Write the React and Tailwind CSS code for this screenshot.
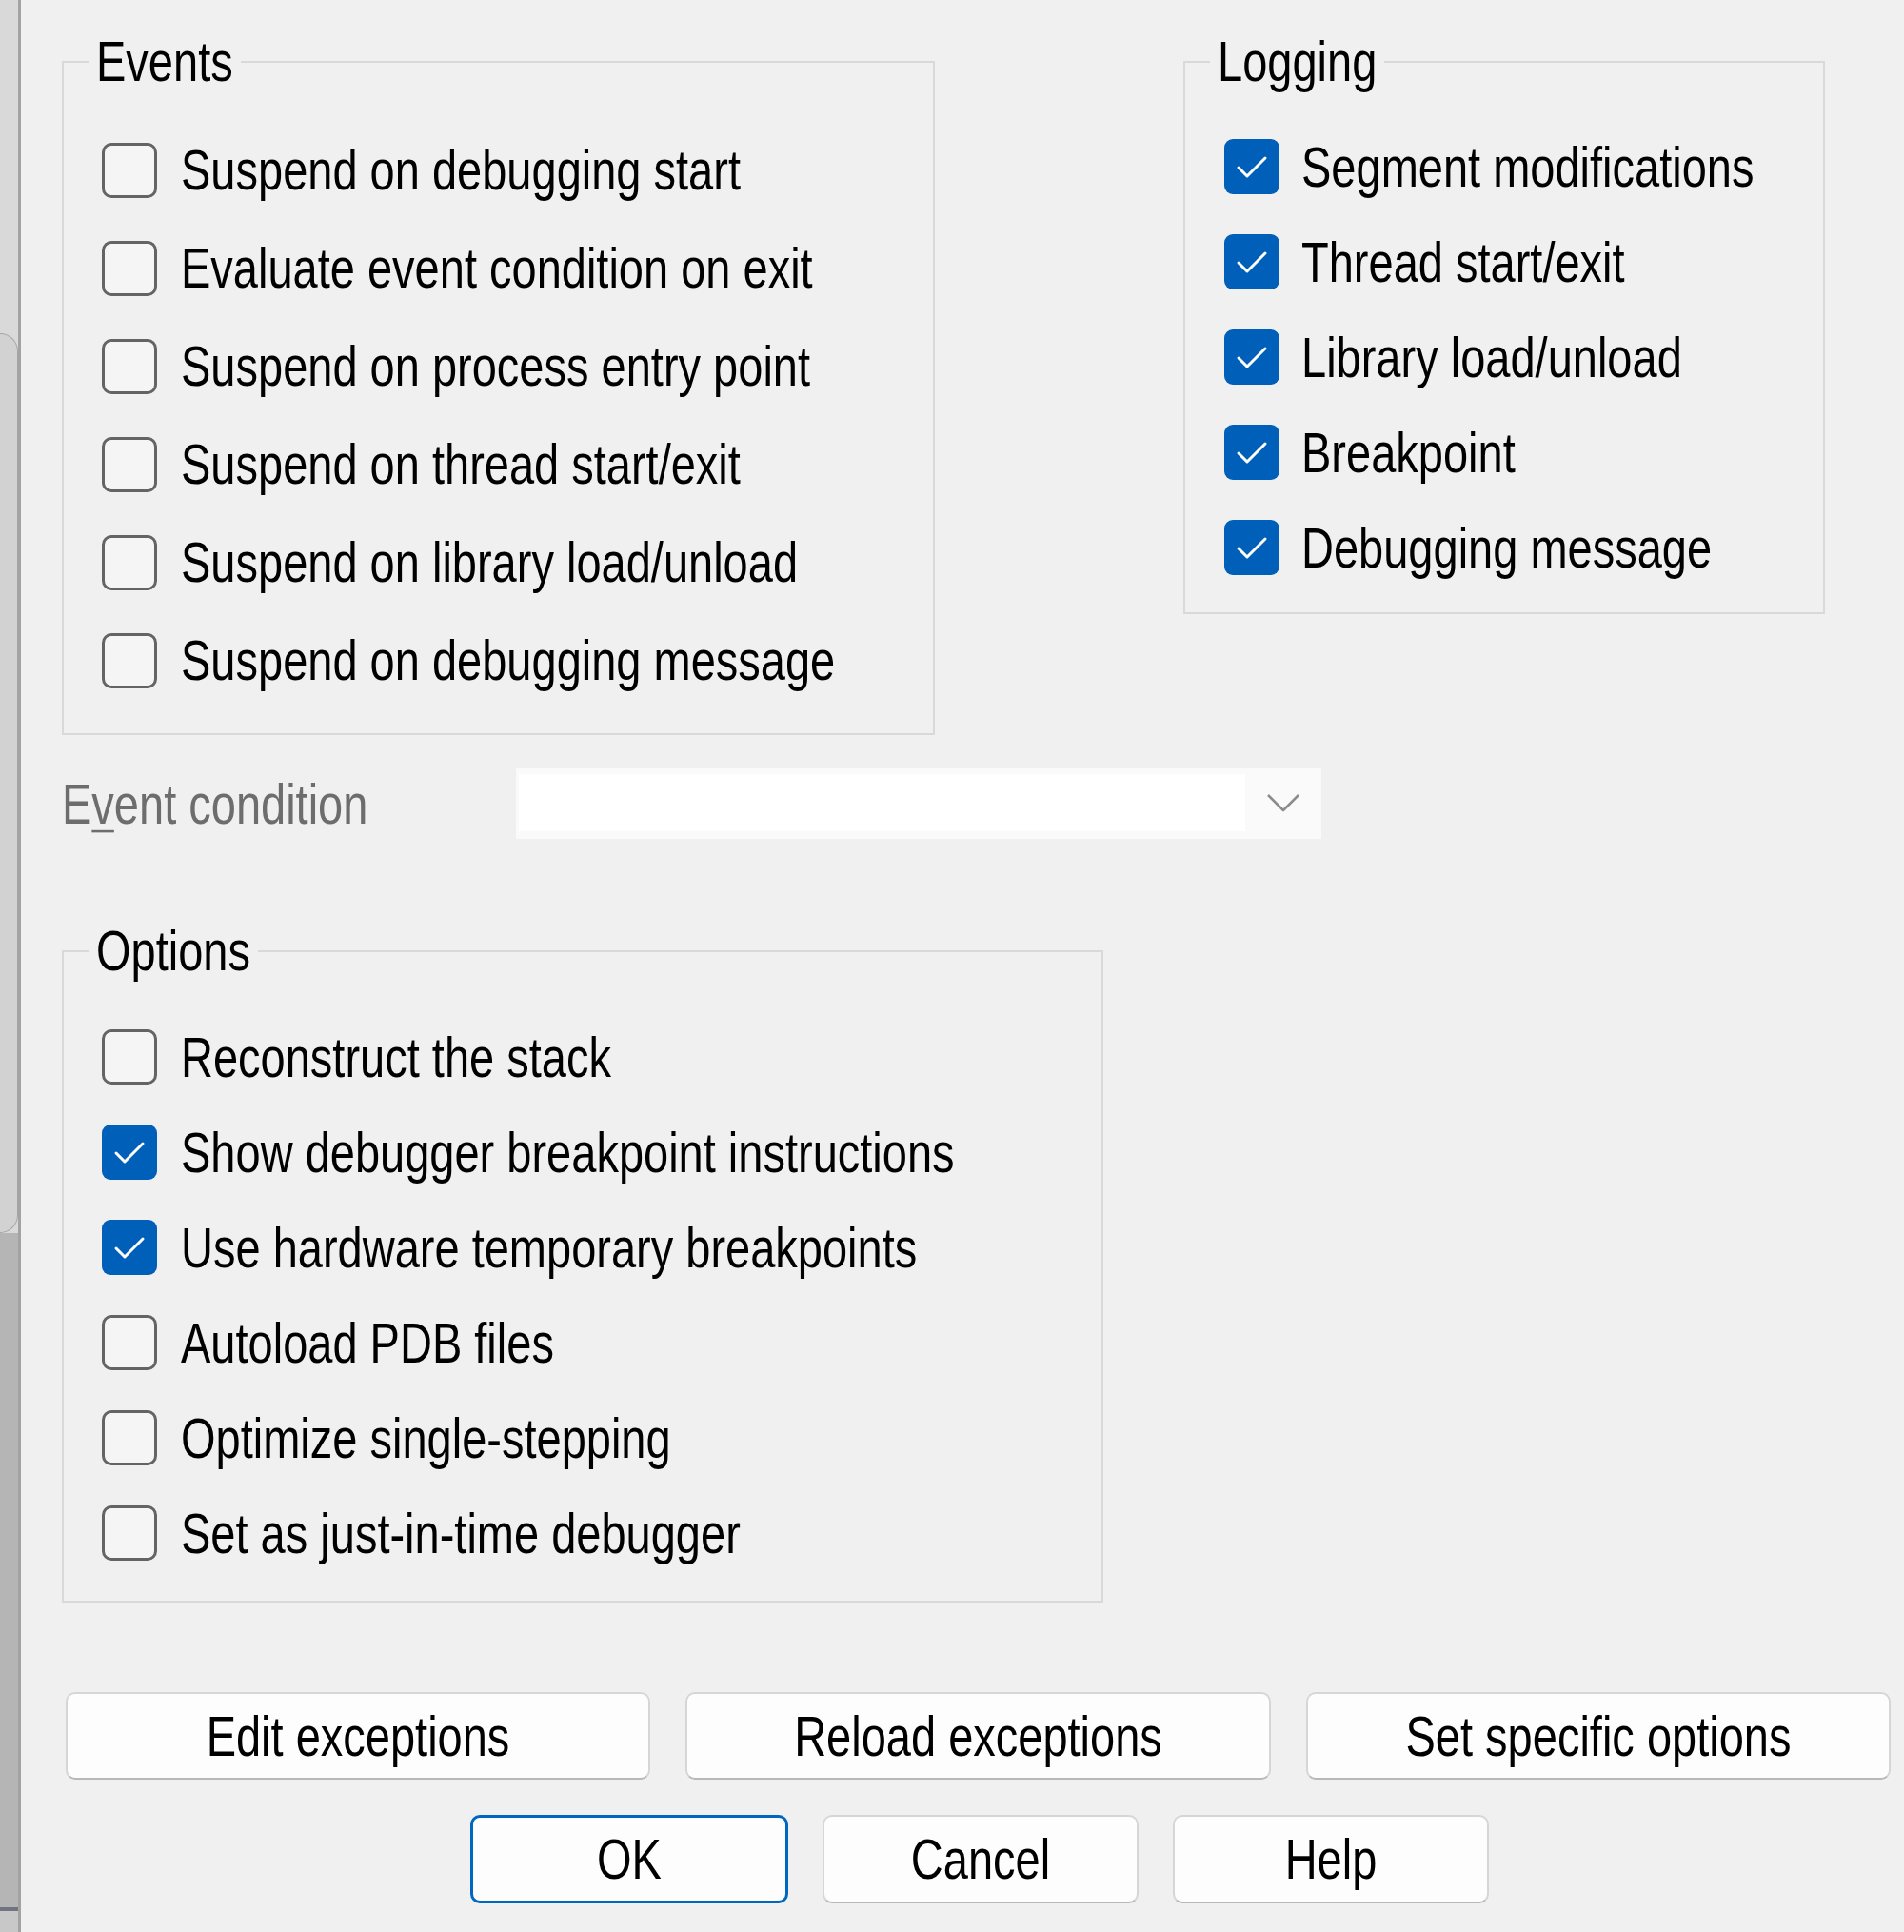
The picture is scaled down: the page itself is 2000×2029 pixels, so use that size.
import React from "react";

const F = "font-['Liberation_Sans',Arial,sans-serif]";

function T({ children, className = "" }) {
  return <span className={`inline-block scale-y-[1.27] whitespace-nowrap ${className}`}>{children}</span>;
}

function Check({ checked }) {
  if (checked)
    return (
      <div className="w-[58px] h-[58px] shrink-0 rounded-[9px] bg-[#005fb8] flex items-center justify-center">
        <svg width="58" height="58" viewBox="0 0 58 58">
          <path d="M15 30 L24 39 L43 20" fill="none" stroke="#ffffff" strokeWidth="3" strokeLinecap="round" strokeLinejoin="round" />
        </svg>
      </div>
    );
  return <div className="w-[58px] h-[58px] shrink-0 rounded-[10px] border-[3px] border-[#646464] bg-[#f5f5f5]" />;
}

function Row({ label, checked, h, gap }) {
  return (
    <div className={`flex items-center ${h} ${gap}`}>
      <Check checked={checked} />
      <T>{label}</T>
    </div>
  );
}

const events = [
  "Suspend on debugging start",
  "Evaluate event condition on exit",
  "Suspend on process entry point",
  "Suspend on thread start/exit",
  "Suspend on library load/unload",
  "Suspend on debugging message",
];

const logging = [
  "Segment modifications",
  "Thread start/exit",
  "Library load/unload",
  "Breakpoint",
  "Debugging message",
];

const options = [
  ["Reconstruct the stack", false],
  ["Show debugger breakpoint instructions", true],
  ["Use hardware temporary breakpoints", true],
  ["Autoload PDB files", false],
  ["Optimize single-stepping", false],
  ["Set as just-in-time debugger", false],
];

function Btn({ children, w, primary }) {
  return (
    <button
      className={`${w} h-full rounded-[10px] bg-[#fdfdfd] text-black text-[47px] leading-none ${
        primary ? "border-[3px] border-[#0067c0]" : "border-2 border-[#d6d6d6] border-b-[#b8b8b8]"
      }`}
    >
      <T>{children}</T>
    </button>
  );
}

export default function App() {
  return (
    <div className={`flex w-[2000px] h-[2029px] overflow-hidden ${F}`}>
      {/* background window strip */}
      <div className="w-[22px] shrink-0 flex flex-col border-r-[3px] border-[#a3a3a3] bg-[#b5b5b5]">
        <div className="h-[350px] bg-[#d9d9d9]" />
        <div className="h-[945px] bg-[#d9d9d9]">
          <div className="h-full rounded-tr-[22px] rounded-br-[22px] bg-[#d2d2d2] border-y border-r border-[#a5a5a5]" />
        </div>
        <div className="h-[708px]" />
        <div className="h-[4px] bg-[#6f7480]" />
        <div className="flex-1 bg-[#c8c8c8]" />
      </div>

      {/* dialog */}
      <div className="flex-1 bg-[#f0f0f0] text-black text-[47px] leading-none pl-[43px] pt-[35px] flex flex-col">
        <div className="flex items-start gap-[261px]">
          <fieldset className="m-0 p-0 min-w-0 border-2 border-[#d9d9d9] w-[917px] h-[737px]">
            <legend className="ml-[26px] px-[8px] leading-[60px]"><T>Events</T></legend>
            <div className="pl-[40px] pt-[32px] flex flex-col">
              {events.map((e) => (
                <Row key={e} label={e} checked={false} h="h-[103px]" gap="gap-[25px]" />
              ))}
            </div>
          </fieldset>
          <fieldset className="m-0 p-0 min-w-0 border-2 border-[#d9d9d9] w-[674px] h-[610px]">
            <legend className="ml-[26px] px-[8px] leading-[60px]"><T>Logging</T></legend>
            <div className="pl-[41px] pt-[30px] flex flex-col">
              {logging.map((e) => (
                <Row key={e} label={e} checked={true} h="h-[100px]" gap="gap-[23px]" />
              ))}
            </div>
          </fieldset>
        </div>

        <div className="mt-[35px] flex items-center h-[74px]">
          <div className="w-[477px] text-[#6d6d6d]">
            <T>
              E<span className="underline decoration-2 underline-offset-[5px]">v</span>ent condition
            </T>
          </div>
          <div className="w-[846px] h-[74px] bg-[#fafafa] flex pt-[6px] pb-[8px] pl-[3px]">
            <div className="flex-1 bg-white" />
            <div className="w-[80px] flex items-center justify-center">
              <svg width="36" height="22" viewBox="0 0 36 22">
                <path d="M2 3 L18 19 L34 3" fill="none" stroke="#8c8c8c" strokeWidth="2.5" strokeLinejoin="round" />
              </svg>
            </div>
          </div>
        </div>

        <fieldset className="mt-[88px] m-0 p-0 min-w-0 border-2 border-[#d9d9d9] w-[1094px] h-[714px]">
          <legend className="ml-[26px] px-[8px] leading-[60px]"><T>Options</T></legend>
          <div className="pl-[40px] pt-[31px] flex flex-col">
            {options.map(([e, c]) => (
              <Row key={e} label={e} checked={c} h="h-[100px]" gap="gap-[25px]" />
            ))}
          </div>
        </fieldset>

        <div className="mt-[94px] h-[92px] flex gap-[37px] pl-[4px]">
          <Btn w="w-[614px]">Edit exceptions</Btn>
          <Btn w="w-[615px]">Reload exceptions</Btn>
          <Btn w="w-[614px]">Set specific options</Btn>
        </div>

        <div className="mt-[37px] h-[93px] flex gap-[36px] pl-[429px]">
          <Btn w="w-[334px]" primary>OK</Btn>
          <Btn w="w-[332px]">Cancel</Btn>
          <Btn w="w-[332px]">Help</Btn>
        </div>
      </div>
    </div>
  );
}
